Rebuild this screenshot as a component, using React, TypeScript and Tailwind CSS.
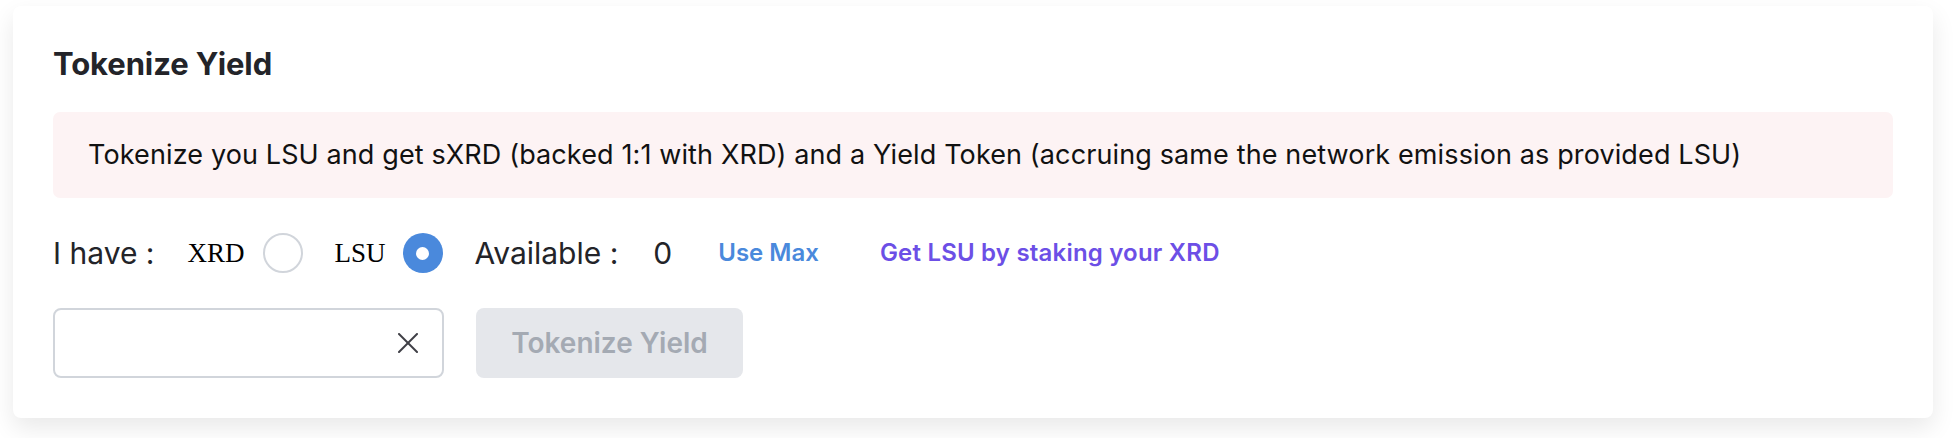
import React from "react";

export default function App() {
  return (
    <div
      className="min-h-screen bg-white pl-[13px] pr-[21px] pt-[6px]"
      style={{ fontFamily: "Inter, 'Noto Sans', sans-serif" }}
    >
      <div className="rounded-lg bg-white px-10 pt-[37px] pb-[40px] shadow-[0_10px_24px_rgba(0,0,0,0.09)]">
        <h2 className="text-[31px] leading-[41px] font-bold text-[#232429] tracking-[-0.1px]">
          Tokenize Yield
        </h2>

        <div className="mt-[28px] flex h-[86px] items-center rounded-[7px] bg-[#fdf3f4] px-[35px] text-[27px] tracking-[0.12px] text-[#111111]">
          Tokenize you LSU and get sXRD (backed 1:1 with XRD) and a Yield Token (accruing same the network emission as provided LSU)
        </div>

        <div className="mt-[35px] flex h-[40px] items-center">
          <span className="text-[30px] text-[#232429]">I have :</span>
          <label
            className="ml-[33px] flex items-center text-[27px] text-black"
            style={{ fontFamily: "'Liberation Serif', serif" }}
          >
            XRD
            <span className="ml-[18px] block h-[40px] w-[40px] rounded-full border-2 border-[#d1d5db] bg-white" />
          </label>
          <label
            className="ml-[32px] flex items-center text-[27px] text-black"
            style={{ fontFamily: "'Liberation Serif', serif" }}
          >
            LSU
            <span className="ml-[17px] flex h-[40px] w-[40px] items-center justify-center rounded-full bg-[#4a89dc]">
              <span className="block h-[13px] w-[13px] rounded-full bg-white" />
            </span>
          </label>
          <span className="ml-[32px] text-[30px] text-[#232429]">Available :</span>
          <span className="ml-[35px] text-[30px] text-[#232429]">0</span>
          <span className="ml-[46px] text-[24px] font-semibold text-[#4a89dc]">Use Max</span>
          <span className="ml-[61px] text-[24px] font-semibold tracking-[0.2px] text-[#6c4fe6]">
            Get LSU by staking your XRD
          </span>
        </div>

        <div className="mt-[35px] flex items-center gap-[32px]">
          <div className="flex h-[70px] w-[391px] items-center justify-end rounded-lg border-2 border-[#d1d5db] bg-white pr-[24px]">
            <svg width="20" height="20" viewBox="0 0 20 20" fill="none" stroke="#3f3f46" strokeWidth="2" strokeLinecap="round">
              <line x1="1" y1="1" x2="19" y2="19" />
              <line x1="19" y1="1" x2="1" y2="19" />
            </svg>
          </div>
          <button className="flex h-[70px] w-[267px] items-center justify-center rounded-lg bg-[#e5e7eb] text-[28px] font-semibold text-[#a4aab3]">
            Tokenize Yield
          </button>
        </div>
      </div>
    </div>
  );
}
